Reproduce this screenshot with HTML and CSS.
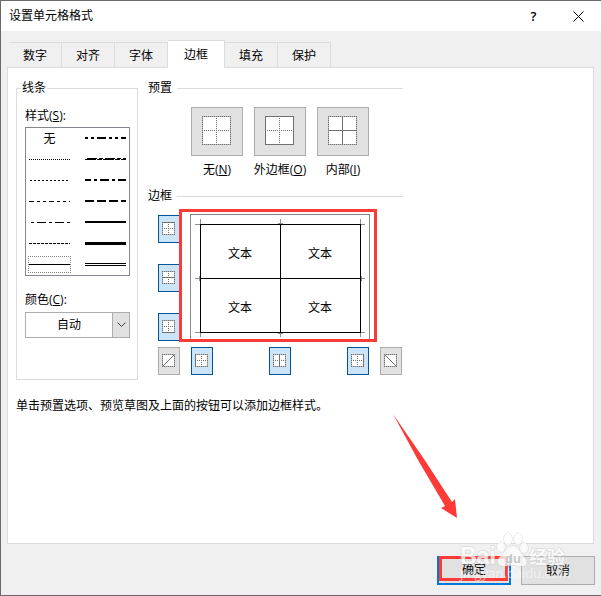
FILE: index.html
```html
<!DOCTYPE html>
<html lang="zh-CN">
  <head>
    <meta charset="UTF-8" />
    <meta name="viewport" content="width=device-width, initial-scale=1.0" />
    <title>设置单元格格式</title>
    <link rel="stylesheet" href="styles.css">
  </head>
  <body>
    <!-- shared cell outlines for the border buttons -->
    <svg class="defs" width="0" height="0" aria-hidden="true">
      <symbol id="cell" viewBox="0 0 13 13">
        <rect width="13" height="13" fill="#fff" />
        <path d="M0 .5H13M0 12.5H13M0 6.5H13M.5 0V13M12.5 0V13M6.5 0V13" stroke="#707070" stroke-dasharray="1 1" />
      </symbol>
      <symbol id="box" viewBox="0 0 13 13">
        <rect width="13" height="13" fill="#fff" />
        <path d="M0 .5H13M0 12.5H13M.5 0V13M12.5 0V13" stroke="#707070" stroke-dasharray="1 1" />
      </symbol>
      <symbol id="cell-lg" viewBox="0 0 29 29">
        <rect width="29" height="29" fill="#fff" />
        <path d="M0 .5H29M0 28.5H29M0 14.5H29M.5 0V29M28.5 0V29M14.5 0V29" stroke="#707070" stroke-dasharray="1 1" />
      </symbol>
    </svg>

    <main class="dialog">
      <header class="titlebar">
        <h1>设置单元格格式</h1>
        <button class="title-btn" type="button" aria-label="帮助">?</button>
        <button class="title-btn" type="button" aria-label="关闭">
          <svg width="11" height="11"><path d="M.5 .5L10.5 10.5M10.5 .5L.5 10.5" stroke="#000" /></svg>
        </button>
      </header>

      <nav class="tabs" role="tablist">
        <button class="tab" type="button" role="tab">数字</button>
        <button class="tab" type="button" role="tab">对齐</button>
        <button class="tab" type="button" role="tab">字体</button>
        <button class="tab active" type="button" role="tab" aria-selected="true">边框</button>
        <button class="tab" type="button" role="tab">填充</button>
        <button class="tab" type="button" role="tab">保护</button>
      </nav>

      <section class="panel">
        <div class="columns">
          <fieldset class="lines">
            <legend>线条</legend>
            <p class="label" id="style-label">样式(<u>S</u>):</p>
            <div class="style-list" role="radiogroup" aria-labelledby="style-label">
              <label class="style"><input type="radio" name="style" />无</label>
              <label class="style"><input type="radio" name="style" aria-label="粗双点划线" />
                <svg width="41" height="5"><path d="M0 2H41" stroke-width="2" stroke-dasharray="3 3 3 3 9 3" /></svg></label>
              <label class="style"><input type="radio" name="style" aria-label="点线" />
                <svg width="41" height="5"><path d="M0 2.5H41" stroke-dasharray="1 1" /></svg></label>
              <label class="style"><input type="radio" name="style" aria-label="斜点划线" />
                <svg width="41" height="5"><path d="M0 2.5H41" stroke-dasharray="11 1 5 1" /><path d="M2 1.5H41" stroke-dasharray="10 2 4 2" /></svg></label>
              <label class="style"><input type="radio" name="style" aria-label="细点线" />
                <svg width="41" height="5"><path d="M1 2.5H40" stroke-dasharray="2 2" /></svg></label>
              <label class="style"><input type="radio" name="style" aria-label="粗点划线" />
                <svg width="41" height="5"><path d="M0 2H41" stroke-width="2" stroke-dasharray="9 3 3 3" stroke-dashoffset="3" /></svg></label>
              <label class="style"><input type="radio" name="style" aria-label="双点划线" />
                <svg width="41" height="5"><path d="M0 2.5H41" stroke-dasharray="5 3 3 3 3 3" /></svg></label>
              <label class="style"><input type="radio" name="style" aria-label="粗虚线" />
                <svg width="41" height="5"><path d="M0 2H41" stroke-width="2" stroke-dasharray="9 3" /></svg></label>
              <label class="style"><input type="radio" name="style" aria-label="点划线" />
                <svg width="41" height="5"><path d="M2 2.5H41" stroke-dasharray="3 3 9 3" /></svg></label>
              <label class="style"><input type="radio" name="style" aria-label="中实线" />
                <svg width="41" height="5"><path d="M0 2H41" stroke-width="2" /></svg></label>
              <label class="style"><input type="radio" name="style" aria-label="虚线" />
                <svg width="41" height="5"><path d="M0 2.5H41" stroke-dasharray="3 1" /></svg></label>
              <label class="style"><input type="radio" name="style" aria-label="粗实线" />
                <svg width="41" height="5"><path d="M0 2.5H41" stroke-width="3" /></svg></label>
              <label class="style selected"><input type="radio" name="style" aria-label="细实线" checked />
                <svg width="41" height="5"><path d="M0 2.5H41" /></svg></label>
              <label class="style"><input type="radio" name="style" aria-label="双线" />
                <svg width="41" height="5"><path d="M0 1.5H41M0 3.5H41" /></svg></label>
            </div>
            <label class="label color-label" for="color">颜色(<u>C</u>):</label>
            <div class="select">
              <select id="color">
                <option>自动</option>
              </select>
              <span class="arrow"><svg width="9" height="6"><path d="M.5 .5L4.5 4.5L8.5 .5" fill="none" stroke="#404040" /></svg></span>
            </div>
          </fieldset>

          <div class="settings">
            <h2>预置</h2>
            <div class="presets">
              <div class="preset">
                <button class="btn" id="none" type="button"><svg width="29" height="29"><use href="#cell-lg" /></svg></button>
                <label for="none">无(<u>N</u>)</label>
              </div>
              <div class="preset">
                <button class="btn" id="outline" type="button"><svg width="29" height="29"><use href="#cell-lg" /><rect x=".5" y=".5" width="28" height="28" /></svg></button>
                <label for="outline">外边框(<u>O</u>)</label>
              </div>
              <div class="preset">
                <button class="btn" id="inside" type="button"><svg width="29" height="29"><use href="#cell-lg" /><path d="M0 14.5H29M14.5 0V29" /></svg></button>
                <label for="inside">内部(<u>I</u>)</label>
              </div>
            </div>

            <h2>边框</h2>
            <div class="board">
              <div class="side">
                <button class="btn on" type="button" aria-label="上边框"><svg width="13" height="13"><use href="#cell" /><path d="M0 .5H13" /></svg></button>
                <button class="btn on" type="button" aria-label="内部横线"><svg width="13" height="13"><use href="#cell" /><path d="M0 6.5H13" /></svg></button>
                <button class="btn on" type="button" aria-label="下边框"><svg width="13" height="13"><use href="#cell" /><path d="M0 12.5H13" /></svg></button>
              </div>
              <div class="preview">
                <svg width="180" height="128">
                  <path class="frame" d="M.5 128V.5H179.5V128" />
                  <path class="tick" d="M10.5 5V15M5 10.5H15M170.5 5V15M166 10.5H175M5 118.5H15M10.5 114V123M166 118.5H175M170.5 114V123M90.5 5V10M88 9.5H93M90.5 119V123M88 119.5H93M5 64.5H10M9.5 62V67M171 64.5H175M171.5 62V67" />
                  <path class="grid" d="M10 10.5H171M10 64.5H171M10 118.5H171M10.5 10V119M90.5 10V119M170.5 10V119" />
                  <text x="50" y="44">文本</text>
                  <text x="130" y="44">文本</text>
                  <text x="50" y="98">文本</text>
                  <text x="130" y="98">文本</text>
                </svg>
                <span class="mark"></span>
              </div>
              <button class="btn diag-up" type="button" aria-label="左斜线"><svg width="13" height="13"><use href="#box" /><path d="M1 12L12 1" /></svg></button>
              <div class="bottom">
                <button class="btn on" type="button" aria-label="左边框"><svg width="13" height="13"><use href="#cell" /><path d="M.5 0V13" /></svg></button>
                <button class="btn on" type="button" aria-label="内部竖线"><svg width="13" height="13"><use href="#cell" /><path d="M6.5 0V13" /></svg></button>
                <button class="btn on" type="button" aria-label="右边框"><svg width="13" height="13"><use href="#cell" /><path d="M12.5 0V13" /></svg></button>
              </div>
              <button class="btn" type="button" aria-label="右斜线"><svg width="13" height="13"><use href="#box" /><path d="M1 1L12 12" /></svg></button>
            </div>
          </div>
        </div>
        <p class="note">单击预置选项、预览草图及上面的按钮可以添加边框样式。</p>
      </section>

      <footer class="footer">
        <button class="action ok" type="button">确定<span class="mark"></span></button>
        <button class="action" type="button">取消</button>
      </footer>

      <svg class="pointer" width="66" height="107" aria-hidden="true">
        <path d="M1 1L32 46L60 89L63 86L65 105L49 95L53 93L26 47Z" fill="#fc3a38" />
      </svg>

      <svg class="watermark" width="112" height="56" aria-hidden="true">
        <g class="ink">
          <text class="brand" x="1" y="34">Bai</text>
          <ellipse cx="42" cy="17" rx="4" ry="5" />
          <ellipse cx="49" cy="9" rx="4" ry="6" />
          <ellipse cx="59" cy="9" rx="4" ry="6" />
          <ellipse cx="65" cy="18" rx="4" ry="5" />
          <path d="M54 16C48 17 46 23 41 27C36 32 40 37 46 36C51 35 56 35 61 36C68 37 70 31 65 27C61 23 59 16 54 16Z" />
          <text class="cn" x="70" y="34">经验</text>
        </g>
        <text class="du" x="46" y="33">du</text>
        <text class="url" x="1" y="48">jingyan.baidu.com</text>
      </svg>
    </main>
  </body>
</html>
```

FILE: styles.css
```css
* {
  box-sizing: border-box;
}

body {
  margin: 0;
  background: #f0f0f0;
  color: #000;
  font: 12px/18px "Open Sans", "Noto Sans CJK SC", sans-serif;
}

h1,
h2,
p {
  margin: 0;
  font-size: 12px;
  font-weight: normal;
}

button,
select {
  margin: 0;
  padding: 0;
  border: 0;
  border-radius: 0;
  background: none;
  color: inherit;
  font: inherit;
}

svg {
  display: block;
}

.defs {
  position: absolute;
}

.dialog {
  position: relative;
  display: flex;
  flex-direction: column;
  min-height: 100vh;
  border: 1px solid #6b696b;
  border-right: 0;
}

.titlebar {
  display: flex;
  align-items: center;
  height: 30px;
  padding-left: 8px;
  background: #fff;

  h1 {
    flex: 1;
  }
}

.title-btn {
  display: flex;
  align-items: center;
  justify-content: center;
  width: 45px;
  height: 30px;
  font-size: 13px;
  font-weight: 600;
}

.tabs {
  display: flex;
  align-items: flex-end;
  height: 37px;
  margin-bottom: -1px;
  padding-left: 8px;
  z-index: 1;
}

.tab {
  width: 53px;
  height: 26px;
  padding-top: 2px;
  border: 1px solid #dcdcdc;
  border-left: 0;

  &.active {
    width: 57px;
    height: 28px;
    padding: 0;
    border-bottom: 0;
    background: #fff;
  }
}

.panel {
  flex: 1;
  margin: 0 7px 0 6px;
  padding: 11px 8px;
  border: 1px solid #dcdcdc;
  background: #fff;
}

.columns {
  display: flex;
  gap: 10px;
}

.lines {
  width: 122px;
  margin: 0;
  padding: 10px 7px 41px 8px;
  border: 1px solid #dcdcdc;

  legend {
    margin-left: -4px;
    padding: 0 1px;
  }
}

.label {
  display: block;
}

.style-list {
  display: grid;
  grid-template-columns: 43px 43px;
  grid-auto-rows: 21px;
  column-gap: 13px;
  margin-top: 2px;
  padding: 0 2px;
  border: 1px solid #828790;
}

.style {
  position: relative;
  display: flex;
  align-items: center;
  justify-content: center;

  input {
    position: absolute;
    opacity: 0;
    margin: 0;
  }

  svg {
    stroke: #000;
    shape-rendering: crispEdges;
  }

  &.selected {
    height: 17px;
    margin-top: 2px;
    border: 1px dotted #808080;
  }
}

.color-label {
  margin-top: 15px;
}

.select {
  display: flex;
  height: 26px;
  margin-top: 3px;
  border: 1px solid #adadad;

  select {
    flex: 1;
    appearance: none;
    text-align: center;
    text-align-last: center;
  }

  .arrow {
    display: flex;
    align-items: center;
    justify-content: center;
    width: 17px;
    border-left: 1px solid #adadad;
    background: #e1e1e1;
  }
}

.settings {
  width: 255px;

  h2 {
    display: flex;
    align-items: center;
    gap: 5px;
  }

  h2::after {
    content: "";
    flex: 1;
    border-top: 1px solid #dcdcdc;
  }
}

.btn {
  display: flex;
  align-items: center;
  justify-content: center;
  width: 22px;
  height: 28px;
  padding: 0 1px 1px 0;
  border: 1px solid #adadad;
  background: #e1e1e1;

  svg {
    fill: none;
    stroke: #707070;
  }

  &.on {
    border-color: #005499;
    background: #cce4f7;
  }
}

.presets {
  display: flex;
  gap: 11px;
  margin: 10px 0 8px;
  padding-left: 43px;
}

.preset {
  display: flex;
  flex-direction: column;
  align-items: center;
  gap: 5px;
  width: 52px;
  white-space: nowrap;

  .btn {
    width: 52px;
    height: 49px;
    padding-bottom: 2px;
  }
}

.board {
  display: grid;
  grid-template-columns: 22px 180px 22px;
  gap: 5px 10px;
  margin-top: 9px;
  padding-left: 10px;
}

.board .btn {
  padding-bottom: 1px;
}

.side {
  display: flex;
  flex-direction: column;
  gap: 21px;
  padding-top: 1px;
}

.preview {
  position: relative;

  path {
    fill: none;
    shape-rendering: crispEdges;
  }

  .frame {
    stroke: #828790;
  }

  .tick {
    stroke: #909090;
  }

  .grid {
    stroke: #000;
  }

  text {
    text-anchor: middle;
  }

  .mark {
    inset: -5px -7px 0 -11px;
  }
}

.mark {
  position: absolute;
  border: 3px solid #fc3a38;
}

.diag-up {
  grid-column: 1;
}

.bottom {
  display: flex;
  justify-content: space-between;
  padding: 0 1px;
}

.note {
  margin-top: 17px;
}

.footer {
  display: flex;
  justify-content: flex-end;
  gap: 10px;
  padding: 12px 6px 10px;
}

.action {
  position: relative;
  width: 74px;
  height: 29px;
  border: 1px solid #adadad;
  background: #e1e1e1;

  &.ok {
    border: 2px solid #0078d7;
    border-top: 0;
  }

  .mark {
    inset: 0 1px 2px 0;
  }
}

.pointer {
  position: absolute;
  right: 143px;
  bottom: 75px;
}

.watermark {
  position: absolute;
  right: 30px;
  bottom: 9px;
  pointer-events: none;

  .ink {
    fill: #fff;
    stroke: #c8c8c8;
    paint-order: stroke;
    opacity: 0.75;
  }

  .brand {
    font: bold 23px "Liberation Sans", sans-serif;
  }

  .cn {
    font: bold 18px "Noto Sans CJK SC", sans-serif;
  }

  .du {
    fill: #c8c8c8;
    font: bold 13px "Liberation Sans", sans-serif;
  }

  .url {
    fill: #fff;
    opacity: 0.6;
    font: 13px "Open Sans", sans-serif;
  }
}
```
